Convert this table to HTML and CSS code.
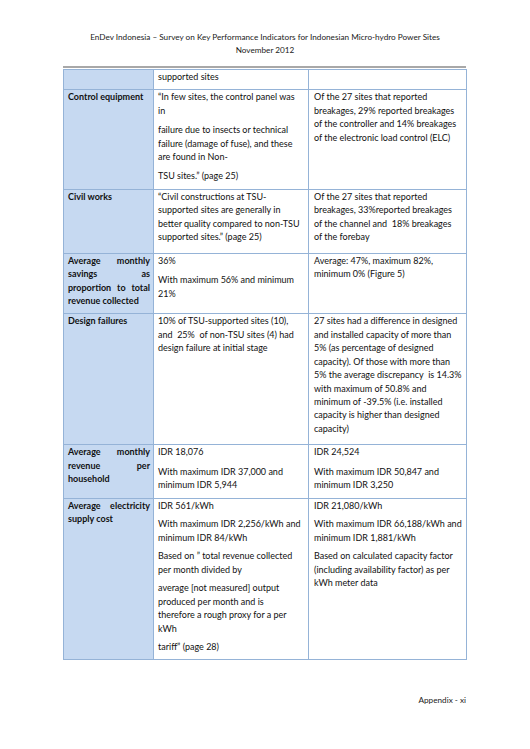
FILE: index.html
```html
<!DOCTYPE html>
<html>
<head>
<meta charset="utf-8">
<link rel="stylesheet" href="styles.css">
</head>
<body>
<div class="page">
  <header class="doc-header">
    <div>EnDev Indonesia – Survey on Key Performance Indicators for Indonesian Micro-hydro Power Sites</div>
    <div>November 2012</div>
  </header>
  <div class="content">
    <div class="rule"></div>
    <table class="kpi">
      <colgroup>
        <col class="c1"><col class="c2"><col class="c3">
      </colgroup>
      <tr class="r1">
        <td class="label"></td>
        <td><p>supported sites</p></td>
        <td></td>
      </tr>
      <tr class="r2">
        <td class="label"><p>Control equipment</p></td>
        <td>
          <p>“In few sites, the control panel was<br>in</p>
          <p>failure due to insects or technical<br>failure (damage of fuse), and these<br>are found in Non-</p>
          <p>TSU sites.” (page 25)</p>
        </td>
        <td><p>Of the 27 sites that reported<br>breakages, 29% reported breakages<br>of the controller and 14% breakages<br>of the electronic load control (ELC)</p></td>
      </tr>
      <tr class="r3">
        <td class="label"><p>Civil works</p></td>
        <td><p>“Civil constructions at TSU-<br>supported sites are generally in<br>better quality compared to non-TSU<br>supported sites.” (page 25)</p></td>
        <td><p>Of the 27 sites that reported<br>breakages, 33%reported breakages<br>of the channel and&nbsp; 18% breakages<br>of the forebay</p></td>
      </tr>
      <tr class="r4">
        <td class="label"><p><span class="jl">Average monthly</span><span class="jl">savings as</span><span class="jl">proportion to total</span><span>revenue collected</span></p></td>
        <td>
          <p>36%</p>
          <p>With maximum 56% and minimum<br>21%</p>
        </td>
        <td><p>Average: 47%, maximum 82%,<br>minimum 0% (Figure 5)</p></td>
      </tr>
      <tr class="r5">
        <td class="label"><p>Design failures</p></td>
        <td><p>10% of TSU-supported sites (10),<br>and&nbsp; 25%&nbsp; of non-TSU sites (4) had<br>design failure at initial stage</p></td>
        <td><p>27 sites had a difference in designed<br>and installed capacity of more than<br>5% (as percentage of designed<br>capacity). Of those with more than<br>5% the average discrepancy&nbsp; is 14.3%<br>with maximum of 50.8% and<br>minimum of -39.5% (i.e. installed<br>capacity is higher than designed<br>capacity)</p></td>
      </tr>
      <tr class="r6">
        <td class="label"><p><span class="jl">Average monthly</span><span class="jl">revenue per</span><span>household</span></p></td>
        <td>
          <p>IDR 18,076</p>
          <p>With maximum IDR 37,000 and<br>minimum IDR 5,944</p>
        </td>
        <td>
          <p>IDR 24,524</p>
          <p>With maximum IDR 50,847 and<br>minimum IDR 3,250</p>
        </td>
      </tr>
      <tr class="r7">
        <td class="label"><p><span class="jl">Average electricity</span><span>supply cost</span></p></td>
        <td>
          <p>IDR 561/kWh</p>
          <p>With maximum IDR 2,256/kWh and<br>minimum IDR 84/kWh</p>
          <p>Based on ” total revenue collected<br>per month divided by</p>
          <p>average [not measured] output<br>produced per month and is<br>therefore a rough proxy for a per<br>kWh</p>
          <p>tariff” (page 28)</p>
        </td>
        <td>
          <p>IDR 21,080/kWh</p>
          <p>With maximum IDR 66,188/kWh and<br>minimum IDR 1,881/kWh</p>
          <p>Based on calculated capacity factor<br>(including availability factor) as per<br>kWh meter data</p>
        </td>
      </tr>
    </table>
    <footer class="doc-footer">Appendix - xi</footer>
  </div>
</div>
</body>
</html>
```

FILE: styles.css
```css
html, body {
  margin: 0;
  padding: 0;
  background: #ffffff;
}

body {
  font-family: Lato, "Open Sans", "Liberation Sans", sans-serif;
  color: #111;
}

.page {
  width: 530px;
  height: 749px;
  overflow: hidden;
}

.doc-header {
  padding-top: 31px;
  text-align: center;
  font-size: 8.2px;
  line-height: 13px;
  color: #1a1a1a;
}

.content {
  margin-left: 63px;
  width: 403px;
}

.rule {
  margin-top: 9px;
  height: 2px;
  background: #a8a8a8;
}

.kpi {
  margin-top: 1px;
  width: 403px;
  border-collapse: collapse;
  table-layout: fixed;
  font-size: 9px;
  line-height: 13.4px;
}

.c1 { width: 90px; }
.c2 { width: 155px; }
.c3 { width: 158px; }

.kpi td {
  border: 1px solid #95b3d7;
  vertical-align: top;
  padding: 0 4px 0 4px;
}

.kpi td:nth-child(3) {
  padding-left: 5px;
}

.kpi p {
  margin: 0 0 6px 0;
  white-space: nowrap;
}

.kpi .r7 p {
  margin-bottom: 5.2px;
}

.kpi td.label {
  background: #c6d9f1;
  font-weight: bold;
  padding-left: 4px;
  padding-right: 3px;
}

.kpi td.label p {
  white-space: normal;
}

.kpi td.label span {
  display: block;
}

.kpi td.label .jl {
  text-align: justify;
  text-align-last: justify;
}

.r1 { height: 20px; }
.r3 { height: 64px; }
.r5 { height: 131px; }

.doc-footer {
  margin-top: 34px;
  text-align: right;
  font-size: 8.2px;
  line-height: 12px;
  color: #1a1a1a;
}
```
